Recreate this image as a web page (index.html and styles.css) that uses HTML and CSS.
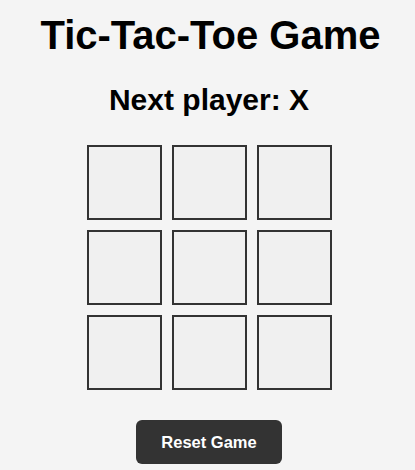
FILE: index.html
```html
<!DOCTYPE html>
<html lang="en">
<head>
<meta charset="utf-8">
<title>Tic-Tac-Toe Game</title>
<link rel="stylesheet" href="styles.css">
</head>
<body>
<main class="game">
  <h1 class="title">Tic-Tac-Toe Game</h1>
  <h2 class="status">Next player: X</h2>
  <div class="board">
    <button class="square"></button>
    <button class="square"></button>
    <button class="square"></button>
    <button class="square"></button>
    <button class="square"></button>
    <button class="square"></button>
    <button class="square"></button>
    <button class="square"></button>
    <button class="square"></button>
  </div>
  <button class="reset">Reset Game</button>
</main>
</body>
</html>
```
FILE: styles.css
```css
html, body {
  margin: 0;
  padding: 0;
  background: #f4f4f4;
}
body {
  font-family: "Liberation Sans", Arial, sans-serif;
  color: #000;
}
.game {
  display: flex;
  flex-direction: column;
  align-items: center;
  padding: 12px 0 0 3px;
}
.title {
  margin: 0;
  padding-left: 3px;
  font-size: 40px;
  line-height: 46px;
  font-weight: bold;
}
.status {
  margin: 25px 0 0;
  font-size: 30px;
  line-height: 34px;
  font-weight: bold;
}
.board {
  margin-top: 28px;
  display: grid;
  grid-template-columns: repeat(3, 75px);
  grid-auto-rows: 75px;
  gap: 10px;
}
.square {
  box-sizing: border-box;
  width: 75px;
  height: 75px;
  margin: 0;
  padding: 0;
  background: #f0f0f0;
  border: 2px solid #333;
  border-radius: 0;
}
.reset {
  margin-top: 30px;
  box-sizing: border-box;
  height: 44px;
  padding: 0 25px;
  background: #333;
  color: #fff;
  border: none;
  border-radius: 6px;
  font-family: "Liberation Sans", Arial, sans-serif;
  font-size: 16.5px;
  font-weight: bold;
}
```
